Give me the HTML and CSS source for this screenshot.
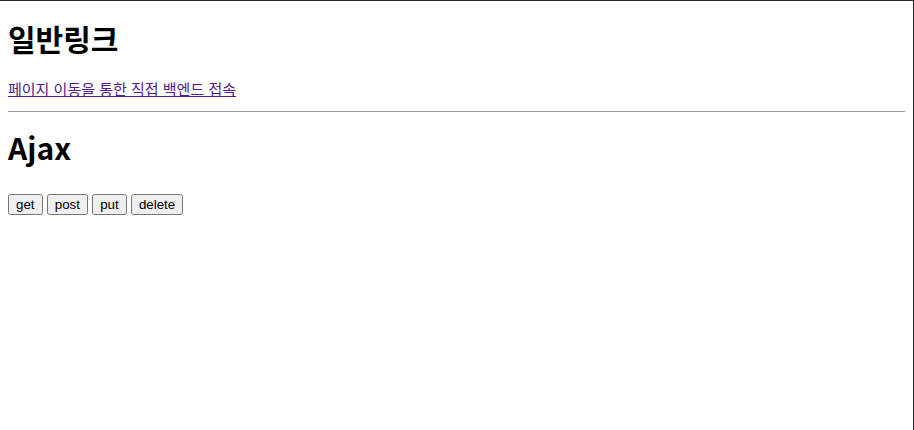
FILE: index.html
```html
<!DOCTYPE html>
<html lang="ko">
	<head>
		<meta charset="UTF-8" />
		<meta name="viewport" content="width=device-width, initial-scale=1.0" />
		<title>Document</title>
		<link rel="stylesheet" href="styles.css">
	</head>
	<body>
		<h1 class="section-title">일반링크</h1>
		<a href="#" class="backend-link">페이지 이동을 통한 직접 백엔드 접속</a>
		<hr />
		<h1 class="section-title ajax-title">Ajax</h1>
		<div class="button-row">
			<button>get</button>
			<button>post</button>
			<button>put</button>
			<button>delete</button>
		</div>
	</body>
</html>
```

FILE: styles.css
```css
html {
	height: 100%;
	box-sizing: border-box;
	border-top: 1px solid #262626;
	border-right: 1px solid #262626;
}

body {
	margin: 0;
	padding: 0 8px;
	font-family: "Noto Sans CJK KR", "Noto Sans", sans-serif;
	font-size: 15px;
	line-height: 20px;
}

.section-title {
	font-size: 30px;
	font-weight: 700;
	line-height: 36px;
	margin: 19px 0 23px;
}

.ajax-title {
	margin: 17px 0 27px;
}

.backend-link {
	color: #551a8b;
}

hr {
	margin: 12px 0 0;
	border: none;
	border-top: 1px solid #9a9a9a;
}

.button-row {
	line-height: normal;
}

button {
	font-family: "Liberation Sans", Arial, sans-serif;
	font-size: 13.33px;
}
```
